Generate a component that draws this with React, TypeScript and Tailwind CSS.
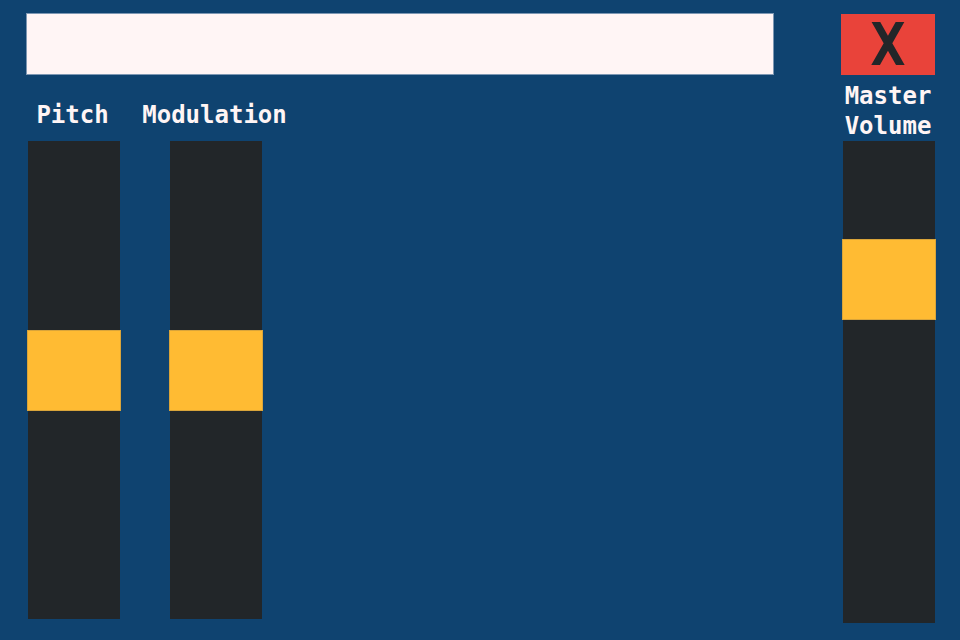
import React from "react";

const mono = { fontFamily: '"DejaVu Sans Mono", "Liberation Mono", monospace' };

interface SliderProps {
  label: string;
  height: number;
  thumbTop: number;
}

function Slider({ label, height, thumbTop }: SliderProps) {
  return (
    <div className="flex flex-col items-center w-[94px]">
      <div
        className="-ml-[3px] mt-px whitespace-nowrap text-[24px] leading-[30px] font-bold text-[#fff5f5]"
        style={mono}
      >
        {label}
      </div>
      <div className="relative mt-[11px] w-[92px] bg-[#222629]" style={{ height }}>
        <div
          className="absolute left-[-1px] w-[94px] h-[81px] bg-[#ffbb33] border border-[#d9a43a]"
          style={{ top: thumbTop }}
        />
      </div>
    </div>
  );
}

export default function App() {
  return (
    <div className="w-[960px] h-[640px] bg-[#0f4370] flex overflow-hidden">
      <div className="ml-[26px] mt-[13px] w-[748px] flex flex-col">
        <div className="h-[62px] bg-[#fff5f5] border border-[#7d97b3]" />
        <div className="mt-[24px] flex gap-[48px] pl-[1px]">
          <Slider label="Pitch" height={478} thumbTop={189} />
          <Slider label="Modulation" height={478} thumbTop={189} />
        </div>
      </div>
      <div className="ml-[67px] mt-[14px] w-[95px] flex flex-col items-center">
        <button className="w-[94px] h-[61px] bg-[#e9433a] flex items-center justify-center self-start">
          <span className="text-[58px] leading-none font-bold text-[#222629]" style={mono}>
            X
          </span>
        </button>
        <div
          className="mt-[6px] -mb-px -ml-px text-center text-[24px] leading-[30px] font-bold text-[#fff5f5]"
          style={mono}
        >
          Master
          <br />
          Volume
        </div>
        <div className="relative mt-px w-[92px] h-[482px] bg-[#222629]">
          <div className="absolute left-[-1px] top-[98px] w-[94px] h-[81px] bg-[#ffbb33] border border-[#d9a43a]" />
        </div>
      </div>
    </div>
  );
}
